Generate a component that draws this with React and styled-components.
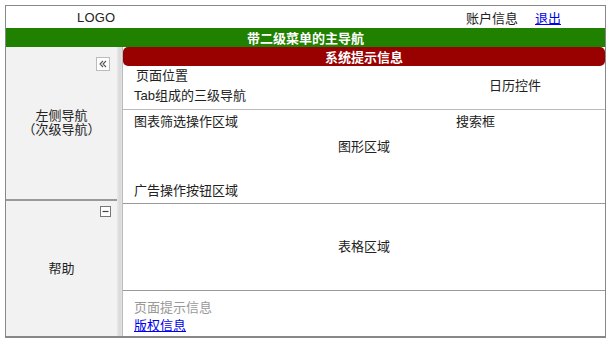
import styled, { createGlobalStyle } from 'styled-components';

const GlobalStyle = createGlobalStyle`
  body {
    margin: 0;
    background: #fff;
    font-family: "Liberation Sans", "Noto Sans CJK SC", sans-serif;
    font-size: 13px;
    color: #222;
  }
`;

const Frame = styled.div`
  margin: 5px;
  width: 601px;
  height: 333px;
  box-sizing: border-box;
  border: 1px solid #888;
  border-bottom-width: 2px;
  display: grid;
  grid-template-rows: 22px 19px 1fr;
`;

const Header = styled.div`
  display: flex;
  align-items: center;
  justify-content: space-between;
  padding: 0 44px 0 71px;
`;

const Logo = styled.div`
  font-size: 13px;
  letter-spacing: 0.2px;
`;

const Account = styled.div`
  display: flex;
  gap: 17px;
  align-items: center;
`;

const Link = styled.a`
  color: #0000ee;
  text-decoration: underline;
  cursor: pointer;
`;

const MainNav = styled.div`
  background: #208000;
  color: #fff;
  font-weight: bold;
  display: flex;
  align-items: center;
  justify-content: center;
`;

const Body = styled.div`
  display: grid;
  grid-template-columns: 111px 5px 1fr;
  min-height: 0;
`;

const Sidebar = styled.div`
  background: #f2f2f2;
  display: grid;
  grid-template-rows: 154px 1fr;
`;

const SidePanel = styled.div`
  position: relative;
  display: flex;
  align-items: center;
  justify-content: center;
  text-align: center;
  line-height: 14px;
  padding-top: ${p => p.$offset || 0}px;
  border-bottom: ${p => (p.$divided ? '2px solid #999' : 'none')};
`;

const IconButton = styled.button`
  position: absolute;
  top: ${p => p.$top}px;
  right: ${p => p.$right}px;
  width: ${p => p.$size}px;
  height: ${p => p.$size}px;
  padding: 0;
  background: #fff;
  border: 1px solid ${p => p.$border};
  display: flex;
  align-items: center;
  justify-content: center;
`;

const Gutter = styled.div`
  background: linear-gradient(90deg, #e8e8e8, #d8d8d8 60%, #e4e4e4);
`;

const Main = styled.div`
  display: grid;
  grid-template-rows: 19px 44px 94px 87px 1fr;
  border-left: 1px solid #bbb;
  min-height: 0;
`;

const Notice = styled.div`
  background: #990000;
  color: #fff;
  font-weight: bold;
  border-radius: 5px;
  display: flex;
  align-items: center;
  justify-content: center;
`;

const Section = styled.div`
  position: relative;
  border-bottom: ${p => (p.$line ? `1px solid ${p.$line}` : 'none')};
  padding: ${p => p.$pad || '0 0 0 11px'};
`;

const Row = styled.div`
  display: flex;
  align-items: center;
  height: 100%;
  justify-content: space-between;
  padding-right: ${p => p.$right || 0}px;
  padding-bottom: 3px;
  box-sizing: border-box;
`;

const Stack = styled.div`
  display: flex;
  flex-direction: column;
  gap: ${p => p.$gap || 0}px;
`;

const Text = styled.div`
  line-height: ${p => p.$lh || 16}px;
  color: ${p => p.$color || '#222'};
  padding-left: ${p => p.$indent || 0}px;
`;

const ChartGrid = styled.div`
  display: grid;
  grid-template-rows: 16px 34px 1fr 16px;
  height: 100%;
  padding: 4px 0 4px;
  box-sizing: border-box;
`;

const ChartTop = styled.div`
  display: flex;
  justify-content: space-between;
  padding-right: 110px;
`;

const Centered = styled.div`
  display: flex;
  align-items: center;
  justify-content: center;
  height: 100%;
  margin-left: -11px;
`;

export default function App() {
  return (
    <>
      <GlobalStyle />
      <Frame>
        <Header>
          <Logo>LOGO</Logo>
          <Account>
            <span>账户信息</span>
            <Link>退出</Link>
          </Account>
        </Header>
        <MainNav>带二级菜单的主导航</MainNav>
        <Body>
          <Sidebar>
            <SidePanel $divided $offset={0}>
              <IconButton $top={10} $right={7} $size={14} $border="#bbb">
                <svg width="10" height="10" viewBox="0 0 10 10">
                  <path d="M5 2 L2 5 L5 8 M8 2 L5 5 L8 8" fill="none" stroke="#555" strokeWidth="1.1" />
                </svg>
              </IconButton>
              <span>左侧导航<br />（次级导航）</span>
            </SidePanel>
            <SidePanel $offset={0}>
              <IconButton $top={5} $right={6} $size={11} $border="#777">
                <svg width="9" height="9" viewBox="0 0 9 9">
                  <path d="M1.5 4.5 H7.5" stroke="#444" strokeWidth="1.2" />
                </svg>
              </IconButton>
              <span>帮助</span>
            </SidePanel>
          </Sidebar>
          <Gutter />
          <Main>
            <Notice>系统提示信息</Notice>
            <Section $line="#bbb">
              <Row $right={64}>
                <Stack $gap={4}>
                  <Text $indent={2}>页面位置</Text>
                  <Text>Tab组成的三级导航</Text>
                </Stack>
                <Text>日历控件</Text>
              </Row>
            </Section>
            <Section $line="#999">
              <ChartGrid>
                <ChartTop>
                  <Text>图表筛选操作区域</Text>
                  <Text>搜索框</Text>
                </ChartTop>
                <Centered>
                  <Text>图形区域</Text>
                </Centered>
                <div />
                <Text>广告操作按钮区域</Text>
              </ChartGrid>
            </Section>
            <Section $line="#999">
              <Centered>
                <Text>表格区域</Text>
              </Centered>
            </Section>
            <Section $pad="8px 0 0 11px">
              <Text $color="#999" $lh={18}>页面提示信息</Text>
              <Text $lh={18}><Link>版权信息</Link></Text>
            </Section>
          </Main>
        </Body>
      </Frame>
    </>
  );
}
